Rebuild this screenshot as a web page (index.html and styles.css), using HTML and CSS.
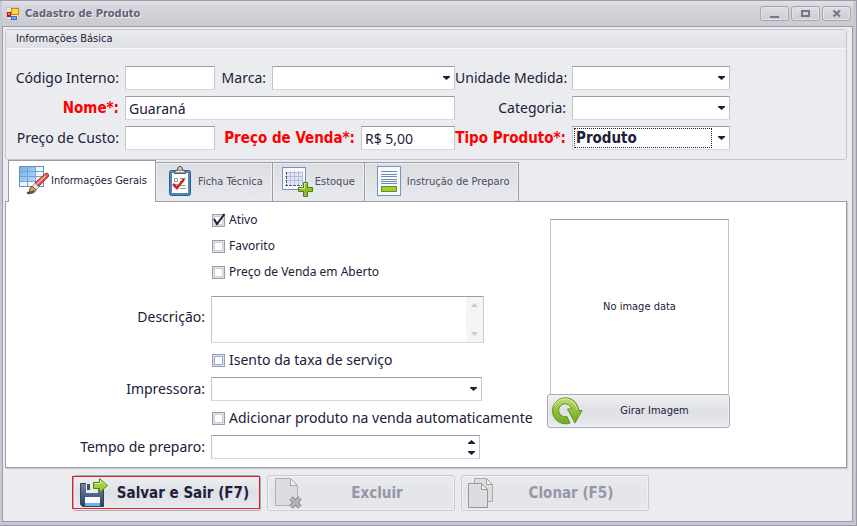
FILE: index.html
```html
<!DOCTYPE html>
<html lang="pt-BR">
<head>
<meta charset="utf-8">
<meta name="viewport" content="width=device-width, initial-scale=1">
<title>Cadastro de Produto</title>
<link rel="stylesheet" href="styles.css">
</head>
<body>
<div class="window">
  <header class="titlebar">
    <svg class="app-icon" width="14" height="14" viewBox="0 0 14 14" aria-hidden="true">
      <rect x="0.5" y="0.5" width="12" height="12" fill="#e4e4e8" stroke="#c4c4cc"/>
      <rect x="5.5" y="1.5" width="7" height="6" fill="#ffd540" stroke="#c08a00"/>
      <rect x="1" y="5" width="4" height="5" fill="#b01818"/><rect x="2" y="6" width="2" height="2" fill="#ff7d60"/>
      <rect x="5.5" y="9.5" width="5" height="3" fill="#6fa8f4" stroke="#3a6cc8"/>
    </svg>
    <h1 class="title">Cadastro de Produto</h1>
    <div class="window-buttons">
      <button type="button" class="window-button" aria-label="Minimizar"><svg width="10" height="8" viewBox="0 0 10 8"><path d="M0 6h9v2H0z" fill="#777787"/></svg></button>
      <button type="button" class="window-button" aria-label="Maximizar"><svg width="10" height="8" viewBox="0 0 10 8"><path d="M1 1h7v5H1z" fill="none" stroke="#777787" stroke-width="2"/></svg></button>
      <button type="button" class="window-button" aria-label="Fechar"><svg width="10" height="8" viewBox="0 0 10 8"><path d="M1.500.500L8 6.500M8 .500L1.500 6.500" fill="none" stroke="#777787" stroke-width="2.200"/></svg></button>
    </div>
  </header>

  <main class="content">
    <section class="group">
      <h2 class="group-title">Informações Básica</h2>
      <div class="basic">
        <label class="label" for="codigo">Código Interno:</label>
        <div class="pair">
          <input class="field code" id="codigo" type="text">
          <label class="label grow" for="marca">Marca:</label>
          <span class="combo brand"><select class="field" id="marca"><option></option></select><svg class="arrow" width="7" height="4" viewBox="0 0 7 4"><path d="M0 0h7v1L3.500 4 0 1z"/></svg></span>
        </div>
        <label class="label" for="unidade">Unidade Medida:</label>
        <span class="combo"><select class="field" id="unidade"><option></option></select><svg class="arrow" width="7" height="4" viewBox="0 0 7 4"><path d="M0 0h7v1L3.500 4 0 1z"/></svg></span>

        <label class="label required" for="nome">Nome*:</label>
        <input class="field" id="nome" type="text" value="Guaraná">
        <label class="label" for="categoria">Categoria:</label>
        <span class="combo"><select class="field" id="categoria"><option></option></select><svg class="arrow" width="7" height="4" viewBox="0 0 7 4"><path d="M0 0h7v1L3.500 4 0 1z"/></svg></span>

        <label class="label" for="custo">Preço de Custo:</label>
        <div class="pair">
          <input class="field code" id="custo" type="text">
          <label class="label required grow" for="venda">Preço de Venda*:</label>
          <input class="field price" id="venda" type="text" value="R$ 5,00">
        </div>
        <label class="label required" for="tipo">Tipo Produto*:</label>
        <span class="combo focused"><select class="field" id="tipo"><option>Produto</option></select><svg class="arrow" width="7" height="4" viewBox="0 0 7 4"><path d="M0 0h7v1L3.500 4 0 1z"/></svg></span>
      </div>
    </section>

    <div class="tabs" role="tablist">
      <button type="button" class="tab active" role="tab" aria-selected="true">
        <svg width="32" height="32" viewBox="0 0 32 32" aria-hidden="true">
          <defs><linearGradient id="gridFill" x1="0" y1="0" x2="1" y2="1"><stop offset="0" stop-color="#6fb4e4"/><stop offset="1" stop-color="#b4dcf4"/></linearGradient></defs>
          <rect x="2.500" y="1.500" width="24" height="20" fill="#f0f5fc" stroke="#6a8cc4"/>
          <rect x="3" y="2" width="16" height="14" fill="url(#gridFill)"/>
          <path d="M3 6.500h23M3 11.500h23M3 16.500h23M10.500 2v19M18.500 2v19" stroke="#7c9ed4" fill="none"/>
          <path d="M28 9c2-2 5 0 3 3l-9 9-4-3z" fill="#e05348" stroke="#a32a25"/>
          <path d="M29 10.500l-9 8.500" stroke="#ffb0a0" stroke-width="1.500"/>
          <path d="M18 18l4 4-3 3-4-3z" fill="#e4e8ee" stroke="#8a929e"/>
          <path d="M15 21l4 4c-2 4-5 3-8 4 2-2 1-6 4-8z" fill="#e69b32" stroke="#70502a"/>
          <path d="M10 28c3-1 5 0 7-2" stroke="#31557e" stroke-width="2" fill="none"/>
        </svg>
        <span>Informações Gerais</span>
      </button>
      <button type="button" class="tab" role="tab" aria-selected="false">
        <svg width="32" height="32" viewBox="0 0 32 32" aria-hidden="true">
          <rect x="5.500" y="4.500" width="21" height="25" rx="2" fill="#4f87bd" stroke="#2b5f98"/>
          <rect x="8" y="7" width="16" height="20" fill="#fff"/>
          <path d="M10.500 12.500h3v3h-3zM10.500 18.500h3v3h-3z" fill="none" stroke="#999"/>
          <path d="M16 12.500h6M16 15.500h4M16 19.500h5M16 22.500h6" stroke="#999"/>
          <path d="M9 18l4 4 7-9" stroke="#cf2523" stroke-width="2.500" fill="none"/>
          <path d="M10.500 7.500V5l3-1c0-5 5-5 5 0l3 1v2.500z" fill="#a4a4a4" stroke="#555"/>
          <path d="M12 5.500h8" stroke="#e0e0e0"/><circle cx="16" cy="2.500" r="1" fill="#eee"/>
        </svg>
        <span>Ficha Técnica</span>
      </button>
      <button type="button" class="tab" role="tab" aria-selected="false">
        <svg width="32" height="32" viewBox="0 0 32 32" aria-hidden="true">
          <rect x="1.500" y="1.500" width="23" height="22" fill="#f6f9fd" stroke="#7890c0"/>
          <rect x="5" y="6" width="16" height="13" fill="#e2e7f3"/>
          <path d="M4 6.500h17M4 10.500h17M4 14.500h17M9.500 5v15M13.500 5v15M17.500 5v15M21.500 5v15" stroke="#b5bdd5" fill="none"/>
          <path d="M5.500 6v14M4 19.500h17" stroke="#485e8a" stroke-dasharray="3 1"/>
          <path d="M22.500 16.500h4v5h5v4h-5v5h-4v-5h-5v-4h5z" fill="#91bd2d" stroke="#4c8119"/>
          <path d="M23.500 17.500h2M18.500 22.500h5v-5" stroke="#d6ed91" fill="none"/>
        </svg>
        <span>Estoque</span>
      </button>
      <button type="button" class="tab" role="tab" aria-selected="false">
        <svg width="32" height="32" viewBox="0 0 32 32" aria-hidden="true">
          <rect x="4.500" y="0.500" width="23" height="29" fill="#f6f9fd" stroke="#7890c0"/>
          <path d="M8 5.500h16M8 8.500h16M8 10.500h16M8 13.500h16M8 15.500h16M8 17.500h16" stroke="#6e87b3"/>
          <rect x="8.500" y="20.500" width="15" height="5" fill="#a4c934" stroke="#659322"/>
        </svg>
        <span>Instrução de Preparo</span>
      </button>
    </div>

    <section class="panel" role="tabpanel">
      <div class="details">
        <label class="check small"><span class="box"><input type="checkbox" checked><svg class="tick" width="14" height="14" viewBox="0 0 14 14"><path d="M2 6l3 5L12.500 1" fill="none" stroke="#1e1e2e" stroke-width="2"/></svg></span>Ativo</label>
        <label class="check small"><span class="box"><input type="checkbox"></span>Favorito</label>
        <label class="check small"><span class="box"><input type="checkbox"></span>Preço de Venda em Aberto</label>

        <label class="label memo-label" for="descricao">Descrição:</label>
        <div class="memo">
          <textarea class="field" id="descricao"></textarea>
          <span class="memo-bar" aria-hidden="true"><svg width="7" height="4" viewBox="0 0 7 4"><path d="M3.500 0L7 4H0z"/></svg><svg width="7" height="4" viewBox="0 0 7 4"><path d="M0 0h7L3.500 4z"/></svg></span>
        </div>

        <label class="check hot"><span class="box"><input type="checkbox"></span>Isento da taxa de serviço</label>

        <label class="label" for="impressora">Impressora:</label>
        <span class="combo printer"><select class="field" id="impressora"><option></option></select><svg class="arrow" width="7" height="4" viewBox="0 0 7 4"><path d="M0 0h7v1L3.500 4 0 1z"/></svg></span>

        <label class="check"><span class="box"><input type="checkbox"></span>Adicionar produto na venda automaticamente</label>

        <label class="label" for="tempo">Tempo de preparo:</label>
        <div class="spin">
          <input class="field" id="tempo" type="text" inputmode="numeric">
          <span class="spin-buttons">
            <button type="button" aria-label="Aumentar"><svg width="7" height="4" viewBox="0 0 7 4"><path d="M3.500 0L7 3v1H0V3z"/></svg></button>
            <button type="button" aria-label="Diminuir"><svg width="7" height="4" viewBox="0 0 7 4"><path d="M0 0h7v1L3.500 4 0 1z"/></svg></button>
          </span>
        </div>
      </div>

      <div class="picture">
        <div class="picture-frame">No image data</div>
        <button type="button" class="button rotate">
          <svg width="32" height="32" viewBox="0 0 32 32" aria-hidden="true">
            <defs><linearGradient id="spinFill" x1="0" y1="0" x2="0" y2="1"><stop offset="0" stop-color="#c8de78"/><stop offset="0.500" stop-color="#92c13a"/><stop offset="1" stop-color="#70a91d"/></linearGradient></defs>
            <path d="M15 21.500a6.500 6.500 0 1 1 4.500-7.500H15.500l7.500 14 7-12.500h-3.500A13 13 0 1 0 18 28z" fill="url(#spinFill)" stroke="#5c941f"/>
            <path d="M2 12C4 5 11 2 18 5c4 2 6 5 7 10" fill="none" stroke="#e2efb0" opacity="0.700"/>
          </svg>
          <span>Girar Imagem</span>
        </button>
      </div>
    </section>

    <footer class="actions">
      <button type="button" class="button action primary">
        <svg width="32" height="32" viewBox="0 0 32 32" aria-hidden="true">
          <defs><linearGradient id="diskFill" x1="0" y1="0" x2="0" y2="1"><stop offset="0" stop-color="#7286a4"/><stop offset="1" stop-color="#2c405e"/></linearGradient></defs>
          <path d="M2.500 6.500h23v23h-21l-2-2z" fill="url(#diskFill)" stroke="#33435f"/>
          <rect x="8" y="6" width="12" height="10" fill="#e9edf3"/><rect x="9" y="7" width="3" height="6" fill="#3d4f6a"/>
          <rect x="7" y="20" width="15" height="9" fill="#f8fbfd"/><rect x="7" y="26" width="15" height="3" fill="#64b4e8"/>
          <path d="M15.500 5.500h6v-4l8 7-8 7v-4h-6z" fill="#a6cf35" stroke="#4d8616"/>
          <path d="M16.500 6.500h6V3.500l5 4.500" fill="none" stroke="#dcf09e"/>
        </svg>
        <span>Salvar e Sair (F7)</span>
      </button>
      <button type="button" class="button action" disabled>
        <svg width="32" height="32" viewBox="0 0 32 32" aria-hidden="true">
          <path d="M3.500 1.500h15l7 7v20h-22z" fill="#dcdddf" stroke="#b0b0b2"/><path d="M18.500 1.500v7h7z" fill="#f0f0f2" stroke="#a8a8aa"/>
          <path d="M19 21l9 9M28 21l-9 9" stroke="#8c8c8e" stroke-width="5"/><path d="M19 21l9 9M28 21l-9 9" stroke="#b4b4b6" stroke-width="3"/>
        </svg>
        <span>Excluir</span>
      </button>
      <button type="button" class="button action" disabled>
        <svg width="32" height="32" viewBox="0 0 32 32" aria-hidden="true">
          <path d="M8.500 1.500h12l6 6v17h-18z" fill="#dcdddf" stroke="#a8a8aa"/><path d="M20.500 1.500v6h6z" fill="#f0f0f2" stroke="#a0a0a2"/>
          <path d="M2.500 6.500h13l6 6v18h-19z" fill="#dcdddf" stroke="#98989a"/><path d="M15.500 6.500v6h6z" fill="#f0f0f2" stroke="#98989a"/>
        </svg>
        <span>Clonar (F5)</span>
      </button>
    </footer>
  </main>
</div>
</body>
</html>
```
FILE: styles.css
```css
* { box-sizing: border-box; }

:root {
  --ink: #20203a;
  --edge: #9b9ba9;
  --edge-soft: #c5c5cf;
  --surface: #ebecf0;
  --condensed: "DejaVu Sans Condensed", Tahoma, "DejaVu Sans", sans-serif;
}

body {
  margin: 0;
  color: var(--ink);
  font: 14px/20px "Noto Sans", Tahoma, sans-serif;
}

button, input, select, textarea { color: inherit; font: inherit; }
svg { display: block; flex: none; }

.window {
  display: flex;
  flex-direction: column;
  min-height: 100vh;
  padding: 0 3px 3px 2px;
  background: #c8c8d2;
  border: solid var(--edge);
  border-width: 1px 1px 1px 0;
}

.titlebar {
  display: flex;
  align-items: center;
  gap: 5px;
  height: 25px;
  padding: 0 2px 0 4px;
  background: linear-gradient(#e2e2e8, #d7d7dd 20%, #c9c9d0);
}

.title {
  flex: 1;
  margin: 0;
  color: #626276;
  font: bold 11px/20px var(--condensed);
  text-shadow: 1px 1px #eeeef2;
}

.window-buttons { display: flex; gap: 2px; }

.window-button {
  display: flex;
  align-items: center;
  justify-content: center;
  width: 29px;
  height: 15px;
  padding: 0;
  background: linear-gradient(#dedee4, #cbcbd2);
  border: 1px solid #a5a5b1;
  border-radius: 3px;
  box-shadow: inset 0 0 0 1px #e4e4e9;
}

.content {
  flex: 1;
  padding: 2px 5px 10px 2px;
  background: var(--surface);
  border: 1px solid var(--edge);
}

.group {
  border: 1px solid var(--edge-soft);
  border-radius: 3px;
}

.group-title {
  margin: 0;
  padding: 0 10px;
  background: linear-gradient(#e9eaee, #e0e1e5);
  border-bottom: 1px solid #f6f6f9;
  font: 11px/18px var(--condensed);
}

.basic {
  display: grid;
  grid-template-columns: 119px 330px 117px 158px;
  row-gap: 6px;
  padding: 17px 0 9px;
}

.label {
  padding-right: 6px;
  line-height: 24px;
  text-align: right;
  white-space: nowrap;
}

.required {
  color: #f00;
  font: bold 15px/24px var(--condensed);
}

.pair { display: flex; }
.grow { flex: 1; }

.field {
  display: block;
  width: 100%;
  height: 24px;
  margin: 0;
  padding: 0 3px;
  background: #fff;
  border: 1px solid;
  border-color: var(--edge) var(--edge-soft) #d8d8df var(--edge-soft);
  border-radius: 0;
  outline: 0;
  appearance: none;
}

.code { width: 90px; }
.price { width: 94px; }

.combo { position: relative; display: block; }
.brand { width: 183px; }
.printer { width: 271px; }

.arrow {
  position: absolute;
  top: 10px;
  right: 5px;
  fill: var(--ink);
  pointer-events: none;
}

.focused .field { font: bold 15px/20px var(--condensed); }

.focused::after {
  position: absolute;
  inset: 2px 18px 2px 2px;
  border: 1px dotted var(--ink);
  content: "";
  pointer-events: none;
}

.tabs {
  display: flex;
  align-items: flex-end;
  padding: 0 3px;
}

.tab {
  display: flex;
  align-items: center;
  gap: 2px;
  height: 39px;
  padding: 0 9px 0 8px;
  background: linear-gradient(#dcdde1, #e9eaee);
  border: 1px solid var(--edge);
  border-width: 1px 1px 0 0;
  box-shadow: inset 1px 1px #f0f0f4, inset -1px 0 #f0f0f4;
  color: #4b4b68;
  font: 11px/20px var(--condensed);
  white-space: nowrap;
}

.tab.active {
  z-index: 1;
  height: 42px;
  margin-bottom: -1px;
  padding: 0 8px 1px;
  background: #fff;
  border-left-width: 1px;
  box-shadow: none;
  color: var(--ink);
}

.panel {
  display: flex;
  align-items: flex-start;
  gap: 18px;
  padding: 9px 0 8px;
  background: #fff;
  border: 1px solid var(--edge);
  box-shadow: 1px 1px 1px #c9c9d0;
}

.details {
  display: grid;
  grid-template-columns: 205px 318px;
  row-gap: 8px;
}

.check {
  display: flex;
  grid-column: 2;
  align-items: center;
  gap: 4px;
  height: 18px;
  padding-left: 1px;
  white-space: nowrap;
}

.check.small { font-size: 12px; }
.box { position: relative; display: block; }

.box input {
  display: block;
  width: 13px;
  height: 13px;
  margin: 0;
  background: #fff;
  border: 1px solid var(--edge);
  box-shadow: inset 0 0 0 1px #e0e0e7, inset 0 0 0 2px #cfcfd8;
  appearance: none;
}

.hot .box input { box-shadow: inset 0 0 0 1px #d5e1fa, inset 0 0 0 2px #98a8db; }
.tick { position: absolute; top: -1px; left: 0; pointer-events: none; }
.box input:not(:checked) + .tick { display: none; }

.memo-label, .memo { margin-top: 7px; }
.memo-label { line-height: 42px; }
.memo { position: relative; width: 273px; }
.memo .field { height: 47px; resize: none; }

.memo-bar {
  position: absolute;
  inset: 1px 1px 1px auto;
  display: flex;
  flex-direction: column;
  align-items: center;
  justify-content: space-between;
  width: 17px;
  padding: 6px 0;
  background: #f4f4f6;
  fill: #c8c8ce;
}

.spin { position: relative; width: 269px; }

.spin-buttons {
  position: absolute;
  inset: 1px 1px 1px auto;
  display: grid;
  width: 15px;
}

.spin-buttons button {
  display: grid;
  place-items: center;
  padding: 0;
  background: none;
  border: 0;
  fill: var(--ink);
}

.picture {
  flex: none;
  width: 183px;
  padding-top: 8px;
  font: 11px/20px var(--condensed);
}

.picture-frame {
  display: grid;
  place-items: center;
  height: 175px;
  margin: 0 1px 0 3px;
  border: 1px solid;
  border-color: var(--edge) var(--edge-soft);
  border-bottom: 0;
}

.button {
  display: flex;
  align-items: center;
  padding: 0 4px;
  background: linear-gradient(#eeeff2, #dee0e5 50%, #e9eaef);
  border: 1px solid #a9a9b6;
  border-radius: 3px;
  box-shadow: inset 0 0 0 1px #f2f2f5;
}

.button span { flex: 1; text-align: center; }
.rotate { width: 100%; height: 34px; }

.actions {
  display: flex;
  gap: 6px;
  padding: 7px 0 0 68px;
}

.action {
  width: 188px;
  height: 36px;
  font: bold 15px/20px var(--condensed);
  white-space: nowrap;
}

.action:disabled {
  background: linear-gradient(#ebecef, #e3e4e8 50%, #e8e9ed);
  border-color: #cacad2;
  color: #9696a8;
}

.primary { position: relative; }

.primary::after {
  position: absolute;
  inset: 0 0 1px -2px;
  border: 1px solid #ed1c24;
  content: "";
}
```
